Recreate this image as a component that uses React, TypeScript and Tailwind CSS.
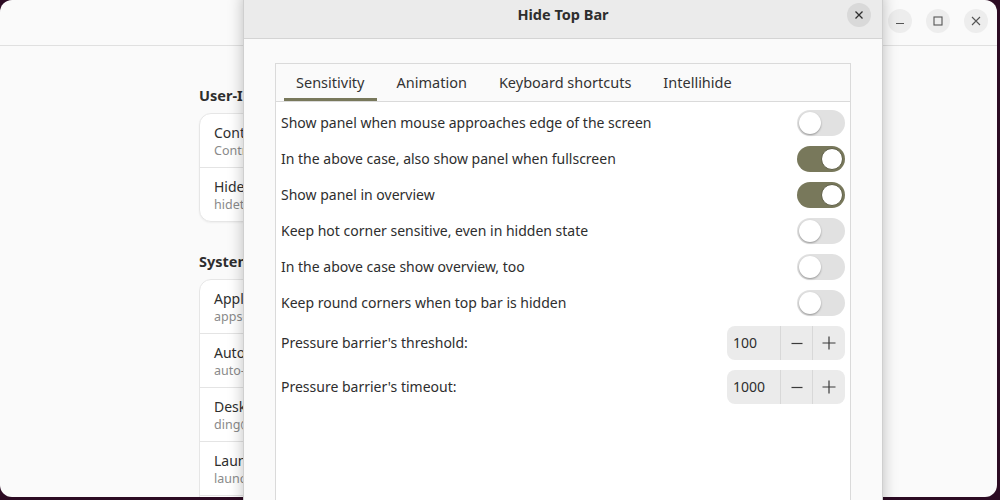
import React from "react";

const font = { fontFamily: '"Noto Sans", "Open Sans", sans-serif' };

function Switch({ on }: { on: boolean }) {
  return (
    <div
      className={
        on
          ? "w-[48px] h-[26px] rounded-full bg-[#78785b] flex items-center justify-end px-[2px] shrink-0"
          : "w-[48px] h-[26px] rounded-full bg-[#e1e1e1] flex items-center justify-start px-[2px] shrink-0"
      }
    >
      <div
        className={
          on
            ? "w-[22px] h-[22px] rounded-full bg-white border border-[#5e5e46]"
            : "w-[22px] h-[22px] rounded-full bg-white shadow-[0_1px_2px_rgba(0,0,0,0.35)]"
        }
      />
    </div>
  );
}

function Spin({ value }: { value: string }) {
  return (
    <div className="w-[118px] h-[34px] rounded-[8px] bg-[#ebebeb] flex items-stretch shrink-0 text-[#2e2e2e]">
      <div className="w-[53px] flex items-center pl-[6px] text-[14px]">{value}</div>
      <div className="w-[32px] border-l border-[#d8d8d8] flex items-center justify-center">
        <svg width="12" height="12" viewBox="0 0 12 12">
          <path d="M0.5 6.5h11" stroke="#3a3a3a" strokeWidth="1.2" />
        </svg>
      </div>
      <div className="w-[33px] border-l border-[#d8d8d8] flex items-center justify-center">
        <svg width="14" height="14" viewBox="0 0 14 14">
          <path d="M0.5 7h13M7 0.5v13" stroke="#3a3a3a" strokeWidth="1.2" />
        </svg>
      </div>
    </div>
  );
}

function CardRow({ title, sub, last }: { title: string; sub: string; last?: boolean }) {
  return (
    <div
      className={
        last
          ? "h-[53px] flex flex-col justify-center px-[14px]"
          : "h-[54px] flex flex-col justify-center px-[14px] border-b border-[#e4e4e4]"
      }
    >
      <div className="whitespace-nowrap text-[14px] leading-[19px] text-[#2e2e2e]">{title}</div>
      <div className="whitespace-nowrap text-[12.5px] leading-[17px] text-[#8a8a8a]">{sub}</div>
    </div>
  );
}

export default function App() {
  const rows: [string, boolean][] = [
    ["Show panel when mouse approaches edge of the screen", false],
    ["In the above case, also show panel when fullscreen", true],
    ["Show panel in overview", true],
    ["Keep hot corner sensitive, even in hidden state", false],
    ["In the above case show overview, too", false],
    ["Keep round corners when top bar is hidden", false],
  ];
  return (
    <div className="w-[1000px] h-[500px] bg-[#2c0b23] relative overflow-hidden" style={font}>
      {/* background window */}
      <div className="w-[997px] h-[497px] rounded-[12px] bg-[#fafafa] overflow-hidden flex flex-col">
        <div className="h-[46px] shrink-0 border-b border-[#e0e0e0] flex items-start justify-end pt-[9px] pr-[9px] gap-[14px]">
          <div className="w-[24px] h-[24px] rounded-full bg-[#ededed] flex items-center justify-center">
            <svg width="10" height="10" viewBox="0 0 10 10">
              <path d="M1 7.5h8" stroke="#555" strokeWidth="1.1" />
            </svg>
          </div>
          <div className="w-[24px] h-[24px] rounded-full bg-[#ededed] flex items-center justify-center">
            <svg width="10" height="10" viewBox="0 0 10 10">
              <rect x="1" y="1" width="8" height="8" fill="none" stroke="#555" strokeWidth="1.1" />
            </svg>
          </div>
          <div className="w-[24px] h-[24px] rounded-full bg-[#ededed] flex items-center justify-center">
            <svg width="10" height="10" viewBox="0 0 10 10">
              <path d="M1 1l8 8M9 1l-8 8" stroke="#555" strokeWidth="1.1" />
            </svg>
          </div>
        </div>
        <div className="pl-[199px] pt-[39px] w-[800px]">
          <div className="whitespace-nowrap text-[14.5px] leading-[20px] font-bold text-[#2e2e2e] mb-[8px]">User-I</div>
          <div className="w-[600px] rounded-[12px] bg-white border border-[#e6e6e6] shadow-[0_1px_2px_rgba(0,0,0,0.05)] overflow-hidden">
            <CardRow title="Cont" sub="Contr" />
            <CardRow title="Hide" sub="hidet" last />
          </div>
          <div className="whitespace-nowrap text-[14.5px] leading-[20px] font-bold text-[#2e2e2e] mt-[29px] mb-[8px]">System</div>
          <div className="w-[600px] rounded-[12px] bg-white border border-[#e6e6e6] overflow-hidden">
            <CardRow title="Appl" sub="apps-" />
            <CardRow title="Auto" sub="auto-" />
            <CardRow title="Desk" sub="ding@" />
            <CardRow title="Laun" sub="launc" />
            <div className="h-[53px]" />
          </div>
        </div>
      </div>

      {/* dialog */}
      <div className="absolute left-[243px] top-[-8px] w-[640px] h-[530px] bg-[#fafafa] border-x border-[#cfcfcf] shadow-[0_2px_14px_rgba(0,0,0,0.25)] flex flex-col">
        <div className="h-[47px] shrink-0 bg-[#ebebeb] border-b border-[#d4d4d4] relative flex items-center justify-center">
          <div className="text-[14.5px] font-bold text-[#2e2e2e]">Hide Top Bar</div>
          <div className="absolute right-[11px] top-[11px] w-[24px] h-[24px] rounded-full bg-[#d9d9d9] flex items-center justify-center">
            <svg width="10" height="10" viewBox="0 0 10 10">
              <path d="M1.5 1.5l7 7M8.5 1.5l-7 7" stroke="#2e2e2e" strokeWidth="1.3" />
            </svg>
          </div>
        </div>
        <div className="pt-[24px] px-[31px] flex-1 flex flex-col">
          <div className="flex-1 border border-[#dadada] flex flex-col">
            <div className="h-[38px] shrink-0 border-b border-[#dadada] bg-[#fafafa] flex items-stretch pl-[8px] gap-[8px] text-[14.5px] leading-[20px] text-[#333]">
              <div className="px-[12px] pb-[1px] flex items-center shadow-[inset_0_-3px_0_#78785b]">Sensitivity</div>
              <div className="px-[12px] pb-[1px] flex items-center">Animation</div>
              <div className="px-[12px] pb-[1px] flex items-center">Keyboard shortcuts</div>
              <div className="px-[12px] pb-[1px] flex items-center">Intellihide</div>
            </div>
            <div className="flex-1 bg-white px-[5px] pt-[3px] text-[14px] leading-[20px] text-[#2e2e2e]">
              {rows.map(([label, on]) => (
                <div key={label} className="h-[36px] flex items-center justify-between">
                  <span>{label}</span>
                  <Switch on={on} />
                </div>
              ))}
              <div className="h-[44px] flex items-center justify-between">
                <span>Pressure barrier's threshold:</span>
                <Spin value="100" />
              </div>
              <div className="h-[44px] flex items-center justify-between">
                <span>Pressure barrier's timeout:</span>
                <Spin value="1000" />
              </div>
            </div>
          </div>
        </div>
      </div>
    </div>
  );
}
